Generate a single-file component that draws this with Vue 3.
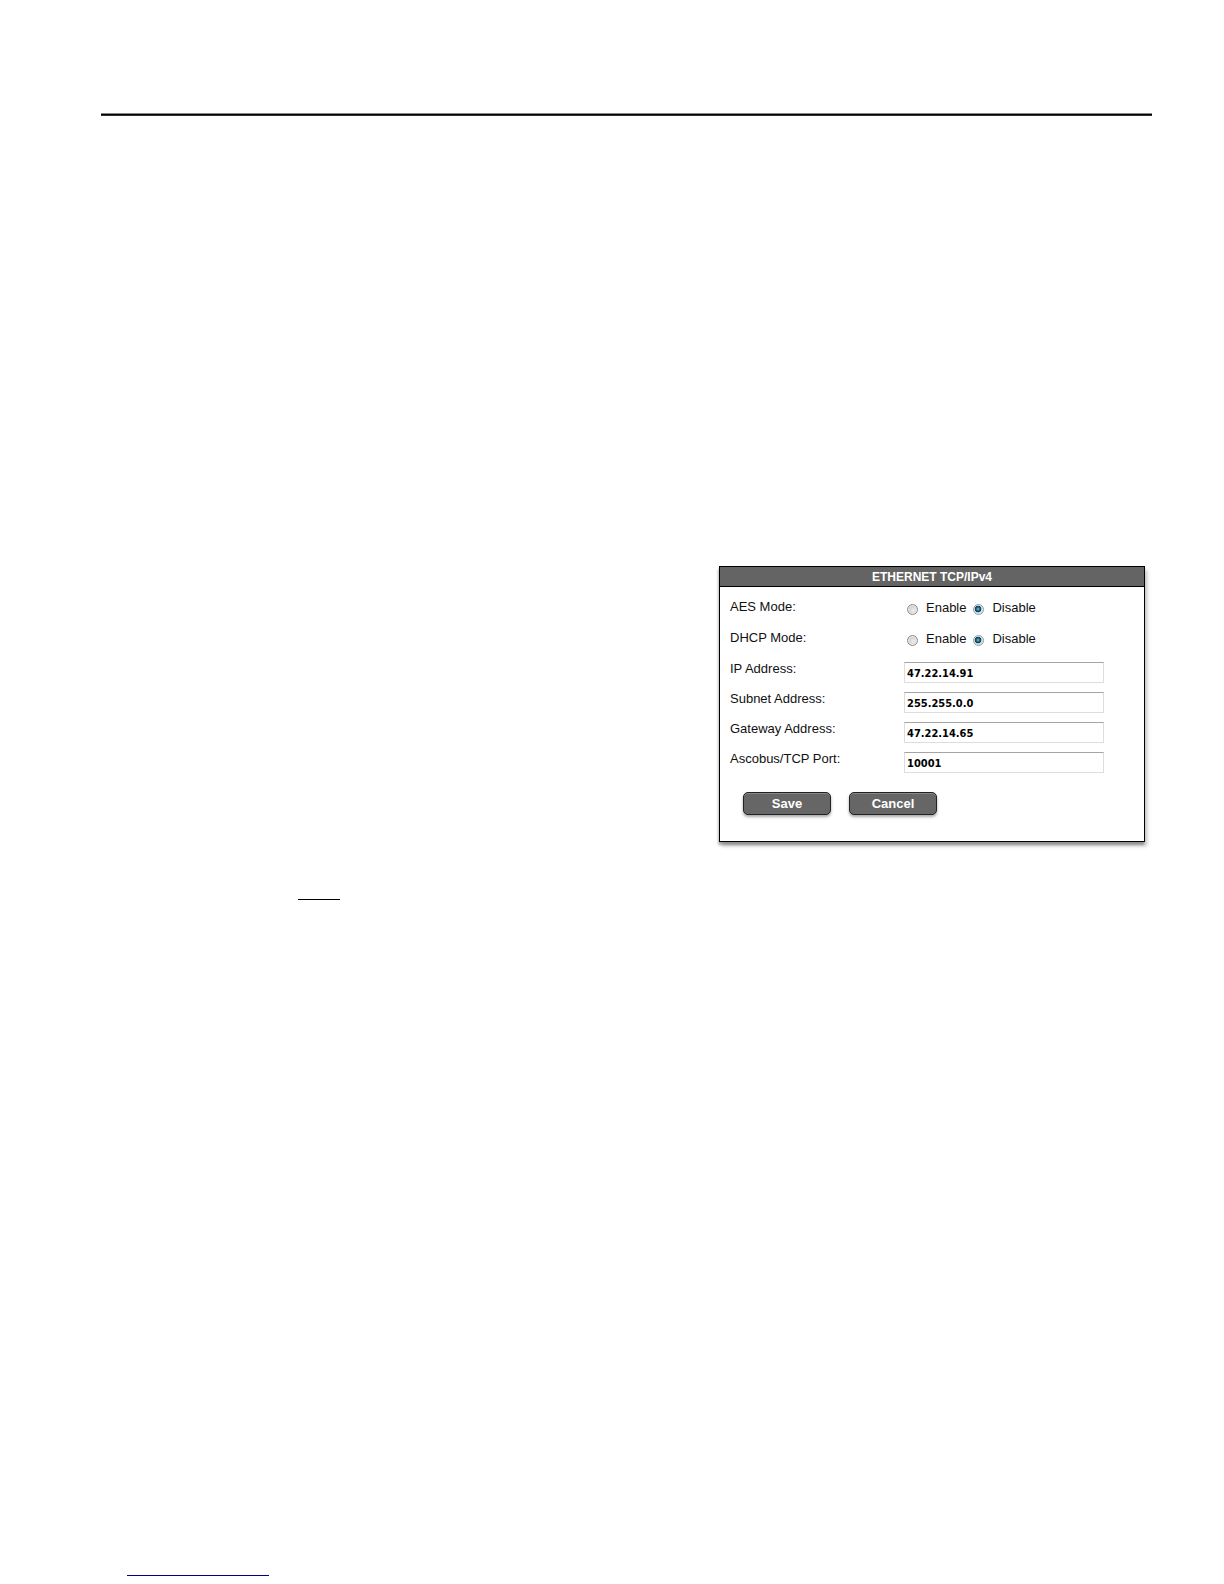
<template>
  <div class="page">
    <hr class="page-rule">

    <form class="panel" @submit.prevent>
      <h1 class="panel-title">ETHERNET TCP/IPv4</h1>
      <div class="panel-body">
        <div
          v-for="mode in modes"
          :key="mode.id"
          class="row row--mode"
          role="radiogroup"
          :aria-labelledby="`${mode.id}-label`"
        >
          <span :id="`${mode.id}-label`" class="row-label">{{ mode.label }}</span>
          <div class="options">
            <label v-for="opt in options" :key="opt" class="option">
              <input v-model="mode.value" type="radio" class="radio" :name="mode.id" :value="opt">
              <span>{{ opt }}</span>
            </label>
          </div>
        </div>

        <div v-for="field in fields" :key="field.id" class="row">
          <label class="row-label" :for="field.id">{{ field.label }}</label>
          <input :id="field.id" v-model="field.value" type="text" class="text-input">
        </div>

        <div class="actions">
          <button type="submit" class="btn">Save</button>
          <button type="button" class="btn">Cancel</button>
        </div>
      </div>
    </form>

    <hr class="mark">
    <hr class="mark mark--link">
  </div>
</template>

<script setup>
import { reactive } from 'vue'

const options = ['Enable', 'Disable']

const modes = reactive([
  { id: 'aes', label: 'AES Mode:', value: 'Disable' },
  { id: 'dhcp', label: 'DHCP Mode:', value: 'Disable' },
])

const fields = reactive([
  { id: 'ip', label: 'IP Address:', value: '47.22.14.91' },
  { id: 'subnet', label: 'Subnet Address:', value: '255.255.0.0' },
  { id: 'gateway', label: 'Gateway Address:', value: '47.22.14.65' },
  { id: 'port', label: 'Ascobus/TCP Port:', value: '10001' },
])
</script>

<style>
body { margin: 0; background: #fff; }
</style>

<style scoped>
.page { display: flex; flex-direction: column; padding: 113px 72px 8px 101px; font-family: "Liberation Sans", Arial, sans-serif; font-size: 13px; color: #111; }
.page-rule { width: 100%; height: 1px; margin: 0; border: 1px solid #888; border-width: 1px 0; border-bottom-color: #333; background: #000; }

.panel { box-sizing: border-box; align-self: flex-end; width: 426px; max-width: 100%; margin: 450px 7px 0 0; border: 1px solid #000; background: #fff; box-shadow: 2px 4px 4px rgba(0, 0, 0, 0.25), -1px 3px 2px rgba(0, 0, 0, 0.25); }
.panel-title { margin: 0; padding-top: 2px; border-bottom: 1px solid #000; background: #646464; color: #fff; font-size: 12px; font-weight: bold; line-height: 17px; text-align: center; }
.panel-body { padding: 12px 10px 26px; }

.row { display: flex; align-items: flex-start; height: 30px; }
.row--mode { height: 31px; }
.row-label { flex: 0 0 174px; line-height: 16px; }
.options { display: flex; gap: 7px; padding-left: 3px; }
.option { display: flex; gap: 8px; line-height: 18px; }
.radio { appearance: none; box-sizing: border-box; width: 11px; height: 11px; margin: 5px 0 0; border: 1px solid #8c8c8c; border-radius: 50%; background: radial-gradient(circle at 60% 60%, #eee, #bbb); box-shadow: inset 0 0 0 1px #eee; }
.radio:checked { border-color: #8fa0aa; background: radial-gradient(circle at 45% 45%, #8cc8e0 0, #24607f 25%, #123c58 42%, #d5e5eb 52%); box-shadow: none; }

.text-input { box-sizing: border-box; flex: 0 1 200px; min-width: 0; height: 21px; margin-top: 1px; padding: 1px 2px 0; border: 1px solid #ddd; border-top-color: #a5a5a5; background: #fff; color: #000; font: bold 11px "DejaVu Sans Condensed", "DejaVu Sans", sans-serif; }

.actions { display: flex; gap: 18px; padding: 11px 13px 0; }
.btn { box-sizing: border-box; width: 88px; height: 23px; padding: 0; border: 1px solid #222; border-radius: 5px; background: #666; box-shadow: inset 0 1px 0 #888, 0 2px 3px rgba(0, 0, 0, 0.35); color: #fff; font: bold 13px "Liberation Sans", Arial, sans-serif; }

.mark { width: 42px; height: 1px; margin: 57px 0 0 197px; border: 0; background: #000; }
.mark--link { width: 142px; margin: 675px 0 0 26px; background: #00008b; }
</style>
